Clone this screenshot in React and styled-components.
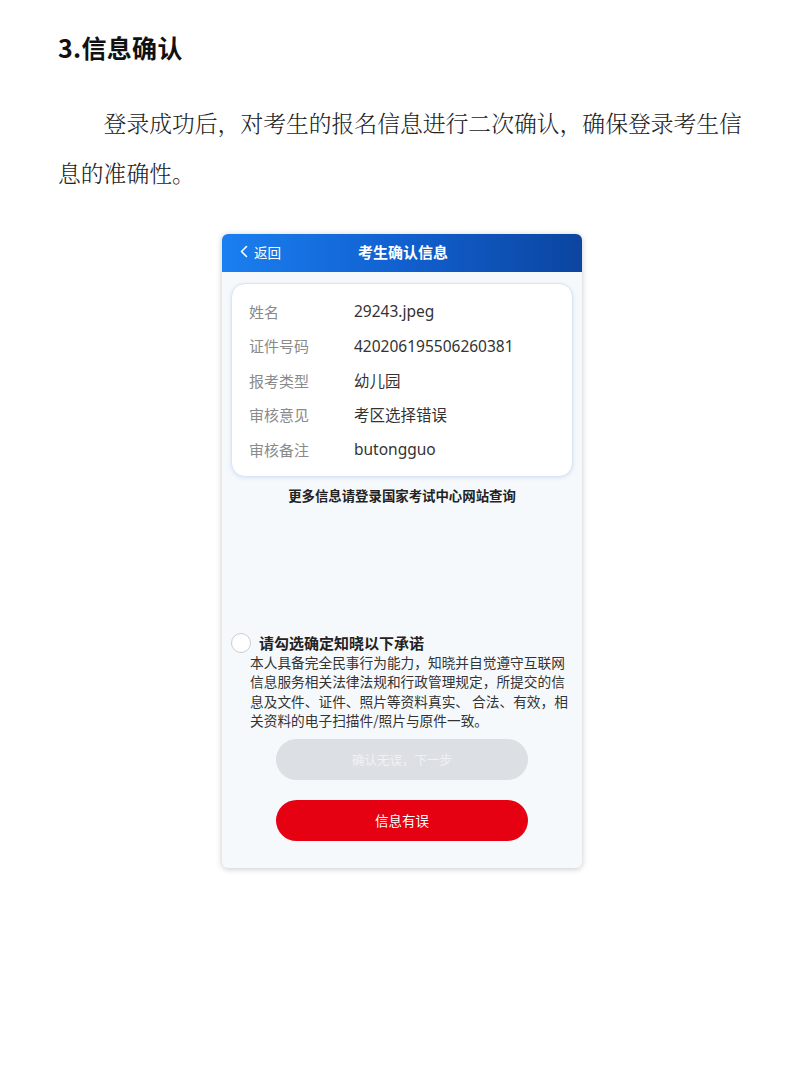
import React from "react";
import styled, { createGlobalStyle } from "styled-components";

const GlobalStyle = createGlobalStyle`
  body {
    margin: 0;
    background: #ffffff;
    font-family: "Noto Sans CJK SC", "Noto Sans", sans-serif;
  }
`;

const Page = styled.div`
  padding: 30px 40px 0 58px;
  height: 1065px;
  box-sizing: border-box;
`;

const Heading = styled.h1`
  margin: 0;
  font-size: 25px;
  line-height: 34px;
  font-weight: 700;
  color: #111;
  letter-spacing: 0.3px;
`;

const Paragraph = styled.p`
  margin: 34px 0 0;
  font-family: "Noto Serif CJK SC", "Noto Sans CJK SC", serif;
  font-weight: 300;
  font-size: 22.8px;
  line-height: 50px;
  text-indent: 2em;
  width: 700px;
  color: #222;
`;

const Phone = styled.div`
  margin: 36px 0 0 164px;
  width: 360px;
  height: 634px;
  border-radius: 6px;
  overflow: hidden;
  background: #f6f9fc;
  box-shadow: 0 1px 6px rgba(0, 0, 0, 0.22);
  display: flex;
  flex-direction: column;
`;

const TopBar = styled.div`
  height: 38px;
  padding-bottom: 3px;
  box-sizing: border-box;
  flex-shrink: 0;
  background: linear-gradient(90deg, #1a7ff0 0%, #1160cf 50%, #0b45a0 100%);
  display: grid;
  grid-template-columns: 1fr auto 1fr;
  align-items: center;
  color: #fff;
`;

const Back = styled.div`
  display: flex;
  align-items: center;
  gap: 6px;
  padding-left: 18px;
  font-size: 13.5px;
`;

const Title = styled.div`
  font-size: 15px;
  font-weight: 700;
  transform: translateX(1px);
`;

const Body = styled.div`
  padding: 11px 9px 27px;
  display: flex;
  flex-direction: column;
  flex: 1;
`;

const Card = styled.div`
  background: #fff;
  border: 1px solid #d9e4f4;
  border-radius: 14px;
  box-shadow: 0 1px 4px rgba(90, 130, 200, 0.18);
  padding: 10px 0 9px 17px;
`;

const Row = styled.div`
  display: flex;
  height: 34.5px;
  align-items: center;
  font-size: 15px;
`;

const Label = styled.span`
  width: 105px;
  color: #8a8a8a;
`;

const Value = styled.span`
  color: #333;
  font-size: 15.5px;
  font-family: "Noto Sans", "Noto Sans CJK SC", sans-serif;
`;

const Note = styled.div`
  margin-top: 9px;
  text-align: center;
  font-size: 13.4px;
  line-height: 18px;
  font-weight: 700;
  color: #222;
`;

const Agreement = styled.div`
  margin-top: 129px;
`;

const CheckRow = styled.div`
  display: flex;
  align-items: center;
  gap: 8px;
`;

const Circle = styled.span`
  width: 18px;
  height: 18px;
  border-radius: 50%;
  border: 1px solid #c8cdd3;
  background: #fff;
`;

const CheckTitle = styled.span`
  font-size: 15px;
  line-height: 20px;
  font-weight: 700;
  color: #222;
`;

const Terms = styled.p`
  margin: 0 0 0 19px;
  font-size: 13.7px;
  line-height: 19.5px;
  color: #333;
  white-space: nowrap;
`;

const Button = styled.button`
  display: block;
  margin: ${(p) => p.$top}px auto 0;
  width: 252px;
  height: 41px;
  border: none;
  border-radius: 21px;
  font-family: inherit;
  font-size: ${(p) => (p.$primary ? 13.5 : 12.5)}px;
  color: ${(p) => (p.$primary ? "#fff" : "#f1f2f4")};
  background: ${(p) => (p.$primary ? "#e50012" : "#dcdfe4")};
`;

const rows = [
  ["姓名", "29243.jpeg"],
  ["证件号码", "420206195506260381"],
  ["报考类型", "幼儿园"],
  ["审核意见", "考区选择错误"],
  ["审核备注", "butongguo"],
];

export default function App() {
  return (
    <>
      <GlobalStyle />
      <Page>
        <Heading>3.信息确认</Heading>
        <Paragraph>
          登录成功后，对考生的报名信息进行二次确认，确保登录考生信息的准确性。
        </Paragraph>
        <Phone>
          <TopBar>
            <Back>
              <svg width="8" height="13" viewBox="0 0 8 13" fill="none">
                <path d="M6.5 1.5 L1.5 6.5 L6.5 11.5" stroke="#fff" strokeWidth="1.6" strokeLinecap="round" strokeLinejoin="round" />
              </svg>
              返回
            </Back>
            <Title>考生确认信息</Title>
            <span />
          </TopBar>
          <Body>
            <Card>
              {rows.map(([label, value]) => (
                <Row key={label}>
                  <Label>{label}</Label>
                  <Value>{value}</Value>
                </Row>
              ))}
            </Card>
            <Note>更多信息请登录国家考试中心网站查询</Note>
            <Agreement>
              <CheckRow>
                <Circle />
                <CheckTitle>请勾选确定知晓以下承诺</CheckTitle>
              </CheckRow>
              <Terms>
                本人具备完全民事行为能力，知晓并自觉遵守互联网
                <br />
                信息服务相关法律法规和行政管理规定，所提交的信
                <br />
                息及文件、证件、照片等资料真实、 合法、有效，相
                <br />
                关资料的电子扫描件/照片与原件一致。
              </Terms>
            </Agreement>
            <Button $top={8}>确认无误，下一步</Button>
            <Button $primary $top={20}>信息有误</Button>
          </Body>
        </Phone>
      </Page>
    </>
  );
}
